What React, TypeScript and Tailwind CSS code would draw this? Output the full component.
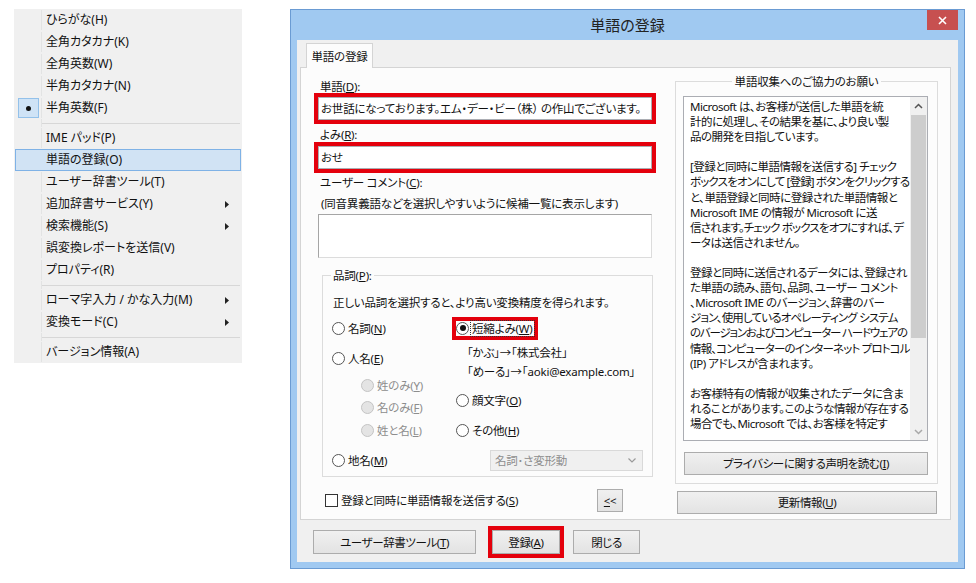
import React from 'react';

// Meiryo UI look-alike: Noto Sans for latin, Noto Sans CJK JP with proportional kana
const jp = "font-['Noto_Sans','Noto_Sans_CJK_JP',sans-serif] [font-feature-settings:'palt']";

type MenuEntry = { label: string; arrow?: boolean; checked?: boolean; active?: boolean } | null;

const menuItems: MenuEntry[] = [
  { label: 'ひらがな(H)' },
  { label: '全角カタカナ(K)' },
  { label: '全角英数(W)' },
  { label: '半角カタカナ(N)' },
  { label: '半角英数(F)', checked: true },
  null,
  { label: 'IME パッド(P)' },
  { label: '単語の登録(O)', active: true },
  { label: 'ユーザー辞書ツール(T)' },
  { label: '追加辞書サービス(Y)', arrow: true },
  { label: '検索機能(S)', arrow: true },
  { label: '誤変換レポートを送信(V)' },
  { label: 'プロパティ(R)' },
  null,
  { label: 'ローマ字入力 / かな入力(M)', arrow: true },
  { label: '変換モード(C)', arrow: true },
  null,
  { label: 'バージョン情報(A)' },
];

// [text, tracking] - katakana-heavy lines need tighter spacing to fit like Meiryo UI
const infoLines: [string, string][] = [
  ['Microsoft は、お客様が送信した単語を統', 'tracking-[-0.5px]'],
  ['計的に処理し、その結果を基に、より良い製', 'tracking-[-0.5px]'],
  ['品の開発を目指しています。', 'tracking-[-0.5px]'],
  ['', ''],
  ['[登録と同時に単語情報を送信する] チェック', 'tracking-[-0.5px]'],
  ['ボックスをオンにして [登録] ボタンをクリックする', 'tracking-[-0.85px]'],
  ['と、単語登録と同時に登録された単語情報と', 'tracking-[-0.5px]'],
  ['Microsoft IME の情報が Microsoft に送', 'tracking-[-0.5px]'],
  ['信されます。チェック ボックスをオフにすれば、デ', 'tracking-[-0.85px]'],
  ['ータは送信されません。', 'tracking-[-0.5px]'],
  ['', ''],
  ['登録と同時に送信されるデータには、登録され', 'tracking-[-0.5px]'],
  ['た単語の読み、語句、品詞、ユーザー コメント', 'tracking-[-0.5px]'],
  ['、Microsoft IME のバージョン、辞書のバー', 'tracking-[-0.5px]'],
  ['ジョン、使用しているオペレーティング システム', 'tracking-[-0.85px]'],
  ['のバージョンおよびコンピューター ハードウェアの', 'tracking-[-1.2px]'],
  ['情報、コンピューターのインターネット プロトコル', 'tracking-[-0.85px]'],
  ['(IP) アドレスが含まれます。', 'tracking-[-0.5px]'],
  ['', ''],
  ['お客様特有の情報が収集されたデータに含ま', 'tracking-[-0.5px]'],
  ['れることがあります。このような情報が存在する', 'tracking-[-0.5px]'],
  ['場合でも、Microsoft では、お客様を特定す', 'tracking-[-0.5px]'],
];

const ImeMenu: React.FC = () => {
  return (
    <div className="w-[228px] bg-[#f0f0f0] text-[12px] leading-[16px]">
      {menuItems.map((item, i) =>
        item === null ? (
          <div key={i} className="h-[8px] flex">
            <div className="w-[28px] border-r border-[#e2e3e3]" />
            <div className="flex-1 flex items-center pr-[2px]">
              <div className="h-px w-full bg-[#d7d7d7]" />
            </div>
          </div>
        ) : (
          <div
            key={i}
            className={`h-[22px] mx-[1px] flex items-center border ${
              item.active ? 'bg-[#d1e3f4] border-[#7fb2e6]' : 'border-transparent'
            }`}
          >
            <div
              className={`w-[26px] h-full flex items-center justify-center border-r ${
                item.active ? 'border-transparent' : 'border-[#e2e3e3]'
              }`}
            >
              {item.checked && (
                <div className="w-[21px] h-[20px] bg-[#cfe3f6] border border-[#93c1ea] flex items-center justify-center">
                  <div className="w-[5px] h-[5px] rounded-full bg-[#111]" />
                </div>
              )}
            </div>
            <span className="pl-[4px] text-[#111]">{item.label}</span>
            {item.arrow && (
              <svg className="ml-auto mr-[11px]" width="4" height="7" viewBox="0 0 4 7">
                <polygon points="0,0 4,3.5 0,7" fill="#222" />
              </svg>
            )}
          </div>
        )
      )}
    </div>
  );
};

const Radio: React.FC<{ checked?: boolean; disabled?: boolean }> = ({ checked, disabled }) => (
  <span
    className={`w-[13px] h-[13px] rounded-full border flex items-center justify-center shrink-0 ${
      disabled ? 'border-[#c4c4c4] bg-[#e4e4e4]' : 'border-[#555] bg-white'
    }`}
  >
    {checked && <span className="w-[6px] h-[6px] rounded-full bg-[#111]" />}
  </span>
);

const RadioRow: React.FC<{ label: string; u: string; rest?: string; disabled?: boolean; className?: string }> = ({
  label,
  u,
  rest = ')',
  disabled,
  className = '',
}) => (
  <div className={`h-[16px] flex items-center ${className}`}>
    <Radio disabled={disabled} />
    <span className={`ml-[3px] ${disabled ? 'text-[#8d8d8d]' : ''}`}>
      {label}
      <span className="underline">{u}</span>
      {rest}
    </span>
  </div>
);

const btn =
  'border border-[#acacac] bg-gradient-to-b from-[#f0f0f0] to-[#e3e3e3] flex items-center justify-center text-[11.5px] tracking-[-0.4px] text-[#111]';

const Dialog: React.FC = () => {
  return (
    <div className="ml-[48px] w-[675px] h-[560px] bg-[#a0c9f1] border border-[#6a9bd3] flex flex-col">
      <div className="h-[30px] relative flex items-center justify-center">
        <span className="text-[15px] text-[#222] leading-[20px]">単語の登録</span>
        <div className="absolute right-[6px] top-0 w-[31px] h-[20px] bg-[#c75050] flex items-center justify-center">
          <svg width="9" height="9" viewBox="0 0 9 9">
            <path d="M1 1 L8 8 M8 1 L1 8" stroke="white" strokeWidth="1.6" />
          </svg>
        </div>
      </div>

      <div className="flex-1 mx-[6px] mb-[6px] bg-[#f0f0f0] px-[3px] pt-[3px] flex flex-col text-[11.5px] tracking-[-0.2px] leading-[15px] text-[#111]">
        {/* tab */}
        <div className="ml-[6px] w-[67px] h-[25px] -mb-[1px] border border-b-0 border-[#d4d4d4] bg-[#fcfcfc] relative z-10 flex items-center justify-center">
          単語の登録
        </div>

        {/* tab panel */}
        <div className="w-[651px] h-[453px] border border-[#d4d4d4] bg-[#fcfcfc] flex pl-[17px]">
          {/* left column */}
          <div className="w-[335px] pt-[11px] flex flex-col">
            <div className="pl-[2px]">
              単語(<span className="underline">D</span>):
            </div>
            <div className="mt-[3px] w-[334px] h-[23px] border border-[#abadb3] bg-white ring-4 ring-[#e4000c] pl-[2px] leading-[21px] overflow-hidden whitespace-nowrap">
              お世話になっております。エム・デー・ビー（株） の作山でございます。
            </div>
            <div className="mt-[7px] pl-[2px]">
              よみ(<span className="underline">R</span>):
            </div>
            <div className="mt-[4px] w-[334px] h-[23px] border border-[#abadb3] bg-white ring-4 ring-[#e4000c] pl-[2px] leading-[21px]">
              おせ
            </div>
            <div className="mt-[6px] pl-[2px]">
              ユーザー コメント(<span className="underline">C</span>):
            </div>
            <div className="mt-[6px] pl-[3px]">(同音異義語などを選択しやすいように候補一覧に表示します)</div>
            <div className="mt-[3px] w-[334px] h-[44px] border border-[#a5a5a5] border-b-[#dcdcdc] border-r-[#dcdcdc] bg-white" />

            <fieldset className="mt-[10px] ml-[4px] w-[331px] border border-[#dcdcdc] px-[9px] pb-[5px]">
              <legend className="px-[2px] -ml-[1px]">
                品詞(<span className="underline">P</span>):
              </legend>
              <div className="mt-[12px] pl-[1px]">正しい品詞を選択すると、より高い変換精度を得られます。</div>
              <div className="mt-[10px] flex">
                <div className="w-[124px] flex flex-col">
                  <RadioRow label="名詞(" u="N" />
                  <RadioRow label="人名(" u="E" className="mt-[14px]" />
                  <RadioRow label="姓のみ(" u="Y" disabled className="mt-[11px] pl-[29px]" />
                  <RadioRow label="名のみ(" u="F" disabled className="mt-[6px] pl-[29px]" />
                  <RadioRow label="姓と名(" u="L" disabled className="mt-[7px] pl-[29px]" />
                  <RadioRow label="地名(" u="M" className="mt-[14px]" />
                </div>
                <div className="flex-1 flex flex-col">
                  <div className="h-[16px] flex items-center">
                    <span className="flex items-center ring-4 ring-[#e4000c]">
                      <Radio checked />
                      <span className="ml-[2px] px-[1px] outline-1 outline-dotted outline-[#333]">
                        短縮よみ(<span className="underline">W</span>)
                      </span>
                    </span>
                  </div>
                  <div className="mt-[9px] pl-[11px] h-[16px]">「かぶ」→「株式会社」</div>
                  <div className="mt-[3px] pl-[11px] h-[16px] whitespace-nowrap">「めーる」→「aoki@example.com」</div>
                  <RadioRow label="顔文字(" u="O" className="mt-[12px]" />
                  <RadioRow label="その他(" u="H" className="mt-[14px]" />
                  <div className="mt-[12px] ml-[34px] w-[153px] h-[21px] border border-[#d9d9d9] bg-[#f0f0f0] flex items-center pl-[4px] text-[#8d8d8d]">
                    名詞･さ変形動
                    <svg className="ml-auto mr-[6px]" width="8" height="5" viewBox="0 0 8 5">
                      <polyline points="0.5,0.5 4,4 7.5,0.5" fill="none" stroke="#9a9a9a" strokeWidth="1.2" />
                    </svg>
                  </div>
                </div>
              </div>
            </fieldset>

            <div className="mt-[12px] h-[23px] flex items-center">
              <span className="ml-[7px] w-[13px] h-[13px] border border-[#333] bg-white" />
              <span className="ml-[3px]">
                登録と同時に単語情報を送信する(<span className="underline">S</span>)
              </span>
              <div className={`ml-auto mr-[30px] w-[26px] h-[23px] ${btn}`}>
                <span className="underline">&lt;</span>&lt;
              </div>
            </div>
          </div>

          {/* right column */}
          <div className="ml-[22px] w-[263px] pt-[6px] flex flex-col">
            <fieldset className="w-[263px] border border-[#dcdcdc] px-[7px] pb-[8px]">
              <legend className="mx-auto px-[3px]">単語収集へのご協力のお願い</legend>
              <div className="mt-[7px] w-[245px] h-[345px] border border-[#abadb3] bg-white flex">
                <div className="flex-1 pl-[6px] pt-[2px] overflow-hidden whitespace-nowrap leading-[15.1px]">
                  {infoLines.map(([l, tr], i) => (
                    <div key={i} className={`h-[15.1px] ${tr}`}>
                      {l}
                    </div>
                  ))}
                </div>
                <div className="w-[17px] bg-[#f0f0f0] flex flex-col">
                  <div className="h-[17px] flex items-center justify-center">
                    <svg width="9" height="6" viewBox="0 0 9 6">
                      <polyline points="1,5 4.5,1.5 8,5" fill="none" stroke="#555" strokeWidth="1.5" />
                    </svg>
                  </div>
                  <div className="mt-[1px] mx-[1px] h-[223px] bg-[#cdcdcd]" />
                  <div className="mt-auto h-[17px] flex items-center justify-center">
                    <svg width="9" height="6" viewBox="0 0 9 6">
                      <polyline points="1,1 4.5,4.5 8,1" fill="none" stroke="#a8a8a8" strokeWidth="1.5" />
                    </svg>
                  </div>
                </div>
              </div>
              <div className={`mt-[11px] ml-[1px] w-[244px] h-[23px] ${btn}`}>
                <span>
                  プライバシーに関する声明を読む(<span className="underline">I</span>)
                </span>
              </div>
            </fieldset>
            <div className={`mt-[7px] ml-[2px] w-[260px] h-[23px] ${btn}`}>
              <span>
                更新情報(<span className="underline">U</span>)
              </span>
            </div>
          </div>
        </div>

        {/* dialog buttons */}
        <div className="mt-[10px] flex">
          <div className={`ml-[13px] w-[163px] h-[24px] ${btn}`}>
            <span>
              ユーザー辞書ツール(<span className="underline">T</span>)
            </span>
          </div>
          <div className={`ml-[16px] w-[68px] h-[24px] ${btn} border-[#3c7fb1] ring-4 ring-[#e4000c]`}>
            <span>
              登録(<span className="underline">A</span>)
            </span>
          </div>
          <div className={`ml-[13px] w-[67px] h-[24px] ${btn}`}>閉じる</div>
        </div>
      </div>
    </div>
  );
};

const App: React.FC = () => {
  return (
    <div className={`w-[976px] h-[583px] bg-white flex items-start pt-[9px] pl-[14px] ${jp}`}>
      <ImeMenu />
      <Dialog />
    </div>
  );
};

export default App;
